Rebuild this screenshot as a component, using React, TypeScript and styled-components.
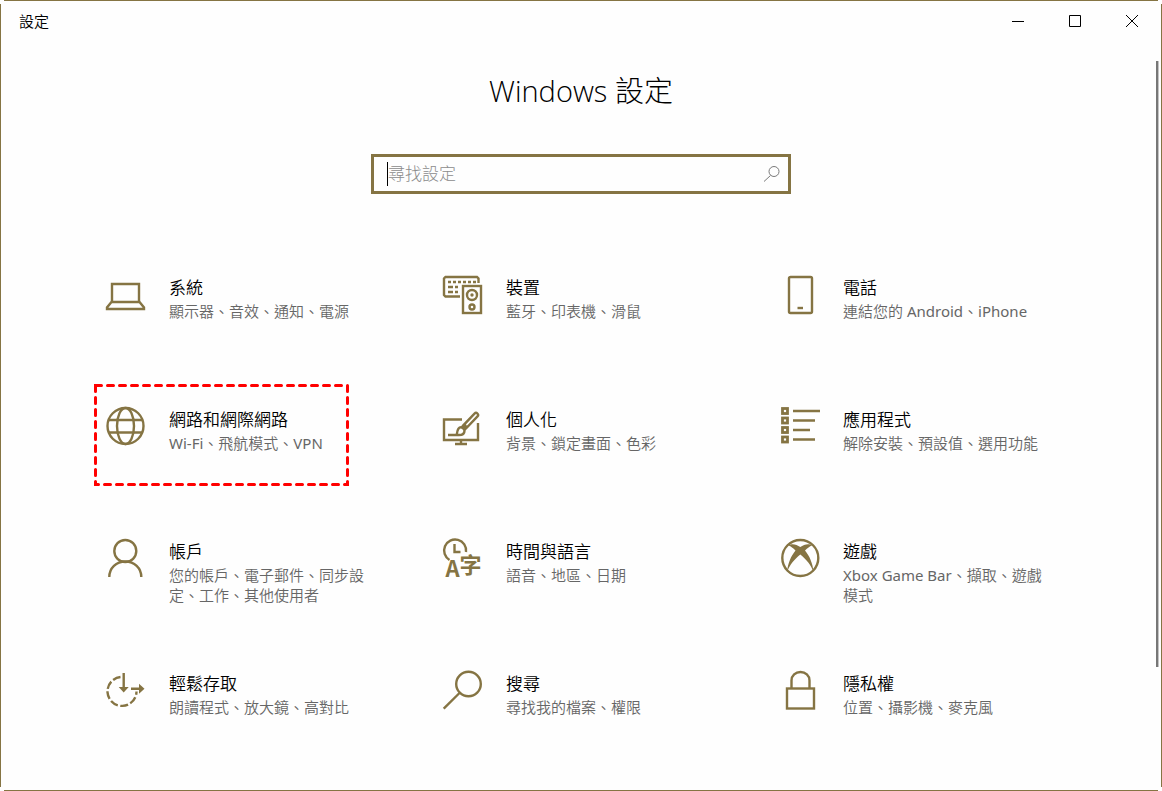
import React from "react";
import styled, { createGlobalStyle } from "styled-components";

const accent = "#857443";
const uiFont = `"Open Sans", "Noto Sans CJK TC", sans-serif`;

const GlobalStyle = createGlobalStyle`
  * { box-sizing: border-box; }
  body { margin: 0; background: #fefefe; font-family: ${uiFont}; }
`;

const Window = styled.div`
  position: relative;
  min-height: 100vh;
  padding: 1px;
  color: #000;
  background:
    linear-gradient(${accent}, ${accent}) center top / calc(100% - 8px) 1px no-repeat,
    linear-gradient(${accent}, ${accent}) center bottom / calc(100% - 8px) 1px no-repeat,
    linear-gradient(${accent}, ${accent}) left center / 1px calc(100% - 8px) no-repeat,
    linear-gradient(${accent}, ${accent}) right center / 1px calc(100% - 8px) no-repeat,
    #fefefe;
`;

const TitleBar = styled.header`
  display: flex;
  justify-content: space-between;
  height: 40px;
`;

const AppName = styled.span`
  padding-left: 18px;
  font-size: 15px;
  line-height: 40px;
  font-weight: 350;
`;

const Controls = styled.div`
  display: flex;
`;

const ControlButton = styled.button`
  display: flex;
  align-items: center;
  justify-content: center;
  width: 57px;
  padding: 0;
  border: 0;
  background: none;
`;

const Main = styled.main`
  display: flex;
  flex-direction: column;
`;

const Heading = styled.h1`
  margin: 30px 0 0;
  text-align: center;
  font-size: 29px;
  line-height: 40px;
  font-weight: 300;
`;

const SearchBox = styled.label`
  display: flex;
  align-items: center;
  align-self: center;
  width: 420px;
  max-width: 90%;
  height: 40px;
  margin-top: 43px;
  padding: 0 7px 0 13px;
  border: 3px solid ${accent};
`;

const Caret = styled.span`
  width: 1px;
  height: 24px;
  background: #000;
`;

const SearchInput = styled.input`
  flex: 1;
  min-width: 0;
  padding: 0;
  border: 0;
  outline: 0;
  background: none;
  font-family: ${uiFont};
  font-size: 17px;
  line-height: 24px;
  font-weight: 300;
  &::placeholder { color: #8c8c8c; opacity: 1; }
`;

const Grid = styled.nav`
  display: grid;
  grid-template-columns: repeat(3, 1fr);
  row-gap: 29px;
  padding: 58px 56px 30px 93px;
`;

const Tile = styled.a`
  position: relative;
  display: flex;
  justify-self: start;
  align-items: flex-start;
  gap: 23px;
  width: 275px;
  max-width: 100%;
  min-height: 103px;
  padding: 23px 0 0 12px;
  color: inherit;
  text-decoration: none;
`;

const TileIcon = styled.svg`
  flex: none;
  width: 40px;
  height: 40px;
  overflow: visible;
  fill: none;
  stroke: ${accent};
  stroke-width: 2.4;
`;

const TileText = styled.span`
  display: flex;
  flex-direction: column;
`;

const TileTitle = styled.span`
  font-size: 17px;
  line-height: 26px;
  font-weight: 350;
`;

const TileDescription = styled.span`
  font-size: 15px;
  line-height: 20px;
  font-weight: 350;
  color: #666;
`;

const Latin = styled.span`
  font-family: "Noto Sans", sans-serif;
  font-weight: 400;
`;

const Highlight = styled.svg`
  position: absolute;
  top: 0;
  left: 0;
  width: 255px;
  height: 103px;
  fill: none;
  stroke: #ff0000;
  stroke-width: 3;
  stroke-linecap: round;
  stroke-dasharray: 6 6;
  pointer-events: none;
`;

const ScrollTrack = styled.div`
  position: absolute;
  top: 61px;
  right: 3px;
  bottom: 0;
  width: 3px;
`;

const ScrollThumb = styled.div`
  height: 83%;
  background: #777;
  border-right: 1px solid #c4c4c4;
`;

const glyph = { fill: accent, stroke: "none" };

const icons = {
  system: (
    <>
      <path d="M6 26V9h27v17" />
      <path d="M5.500 27h28l4.500 5.500v1.500h-37v-1.500z" />
    </>
  ),
  devices: (
    <>
      <path d="M17 21.500H2.500L1 20V3.500L2.500 2H34l1.500 1.500V8" />
      <path d="M5 7h28" strokeDasharray="3 2" />
      <path d="M5 12h5M12 12h3M5 17h5M12 17h3" />
      <rect x="20" y="11" width="18" height="27" />
      <circle cx="29" cy="20" r="5" />
      <circle cx="29" cy="20" r="1.700" {...glyph} />
      <circle cx="29" cy="32" r="2.500" />
    </>
  ),
  phone: (
    <>
      <rect x="9" y="2" width="23" height="36" rx="1.500" />
      <path d="M17.500 33h5.500" />
    </>
  ),
  network: (
    <>
      <circle cx="19.500" cy="19" r="18" />
      <ellipse cx="19.500" cy="19" rx="8.500" ry="18" />
      <path d="M3 13h33M3 25.500h33" />
    </>
  ),
  personalization: (
    <>
      <path d="M19 12.500H1V33h34V16" />
      <path d="M18 33v4M12 37h12" />
      <path d="M33 8L21.500 20" strokeWidth="6.500" strokeLinecap="round" />
      <path d="M33 8L24 17.500" stroke="#fefefe" strokeWidth="1.800" strokeLinecap="round" />
      <path d="M5 28h11c3.500 0 5.500-1.800 5.500-4.300 0-2-1.500-3.400-3.500-3.400-3.400 0-3.800 3.700-4.200 7" />
    </>
  ),
  apps: (
    <>
      {[0, 1, 2, 3].map((i) => (
        <rect key={i} x="2.500" y={1.5 + i * 9.5} width="5" height="5" strokeWidth="2.800" />
      ))}
      <path d="M13 4h27M13 13.500h22M13 23h17M13 32.500h22" />
    </>
  ),
  accounts: (
    <>
      <circle cx="19.300" cy="12" r="11" />
      <path d="M3.300 38c0-9 7-15.500 16-15.500s16 6.500 16 15.500" />
    </>
  ),
  time: (
    <>
      <path d="M6.500 21A11 11 0 1 1 23 13" />
      <path d="M11.500 5v8h6" />
      <text x="9.500" y="38" textAnchor="middle" fontFamily="Noto Sans CJK TC" fontSize="22" fontWeight="700" {...glyph}>A</text>
      <text x="27.500" y="33.500" textAnchor="middle" fontFamily="Noto Sans CJK TC" fontSize="22" fontWeight="700" {...glyph}>字</text>
    </>
  ),
  gaming: (
    <>
      <circle cx="20.300" cy="19" r="18" />
      <path
        d="M7 33C8 24 11 17 15.500 11.500 13 9 11 7.500 8.500 6.500 12 4 16.500 5.500 20.300 8 24 5.500 28.600 4 32 6.500 29.600 7.500 27.600 9 25 11.500 29.600 17 32.600 24 33.600 33 31 26 26 20 20.300 15.500 14.600 20 9.600 26 7 33Z"
        {...glyph}
      />
    </>
  ),
  ease: (
    <>
      <path d="M14.500 6A14.500 14.500 0 1 0 30.500 20.500" strokeDasharray="8 2.500" />
      <path d="M17.700 2v15M25 17.700h9" />
      <path d="M12.700 16h10l-5 5.500zM33 12.700v10l5.500-5z" {...glyph} />
    </>
  ),
  search: (
    <>
      <circle cx="25.500" cy="13" r="12.300" />
      <path d="M16.500 22L.7 37.700" />
    </>
  ),
  privacy: (
    <>
      <rect x="7" y="17.500" width="27" height="20" />
      <path d="M11.500 17V9.500a9 8.500 0 0 1 18 0V17" />
    </>
  ),
};

type Category = {
  icon: keyof typeof icons;
  title: string;
  description: string;
  highlighted?: boolean;
};

const categories: Category[] = [
  { icon: "system", title: "系統", description: "顯示器、音效、通知、電源" },
  { icon: "devices", title: "裝置", description: "藍牙、印表機、滑鼠" },
  { icon: "phone", title: "電話", description: "連結您的 Android、iPhone" },
  { icon: "network", title: "網路和網際網路", description: "Wi-Fi、飛航模式、VPN", highlighted: true },
  { icon: "personalization", title: "個人化", description: "背景、鎖定畫面、色彩" },
  { icon: "apps", title: "應用程式", description: "解除安裝、預設值、選用功能" },
  { icon: "accounts", title: "帳戶", description: "您的帳戶、電子郵件、同步設定、工作、其他使用者" },
  { icon: "time", title: "時間與語言", description: "語音、地區、日期" },
  { icon: "gaming", title: "遊戲", description: "Xbox Game Bar、擷取、遊戲模式" },
  { icon: "ease", title: "輕鬆存取", description: "朗讀程式、放大鏡、高對比" },
  { icon: "search", title: "搜尋", description: "尋找我的檔案、權限" },
  { icon: "privacy", title: "隱私權", description: "位置、攝影機、麥克風" },
];

// Latin runs get their own face and weight beside the lighter Chinese text.
const withLatin = (text: string) =>
  text
    .split(/([A-Za-z][A-Za-z -]*)/)
    .map((part, i) => (i % 2 ? <Latin key={i}>{part}</Latin> : part));

export default function App() {
  return (
    <Window lang="zh-Hant">
      <GlobalStyle />
      <TitleBar>
        <AppName>設定</AppName>
        <Controls>
          <ControlButton aria-label="最小化">
            <svg width="13" height="13" fill="none" stroke="#000"><path d="M0 6.500h12" /></svg>
          </ControlButton>
          <ControlButton aria-label="最大化">
            <svg width="13" height="13" fill="none" stroke="#000"><path d="M.5.5h11v11H.5z" /></svg>
          </ControlButton>
          <ControlButton aria-label="關閉">
            <svg width="13" height="13" fill="none" stroke="#000"><path d="M0 0l12 12M12 0L0 12" /></svg>
          </ControlButton>
        </Controls>
      </TitleBar>
      <Main>
        <Heading>Windows 設定</Heading>
        <SearchBox>
          <Caret />
          <SearchInput type="text" placeholder="尋找設定" aria-label="尋找設定" />
          <svg width="18" height="18" fill="none" stroke="#7a7a7a">
            <circle cx="11" cy="6.500" r="5" />
            <path d="M7.500 10.500L1 16.500" />
          </svg>
        </SearchBox>
        <Grid>
          {categories.map((c) => (
            <Tile key={c.icon} href={`#${c.icon}`}>
              <TileIcon viewBox="0 0 40 40" aria-hidden="true">{icons[c.icon]}</TileIcon>
              <TileText>
                <TileTitle>{c.title}</TileTitle>
                <TileDescription>{withLatin(c.description)}</TileDescription>
              </TileText>
              {c.highlighted && (
                <Highlight viewBox="0 0 255 103" aria-hidden="true">
                  <rect x="1.500" y="1.500" width="252" height="99" />
                </Highlight>
              )}
            </Tile>
          ))}
        </Grid>
      </Main>
      <ScrollTrack>
        <ScrollThumb />
      </ScrollTrack>
    </Window>
  );
}
